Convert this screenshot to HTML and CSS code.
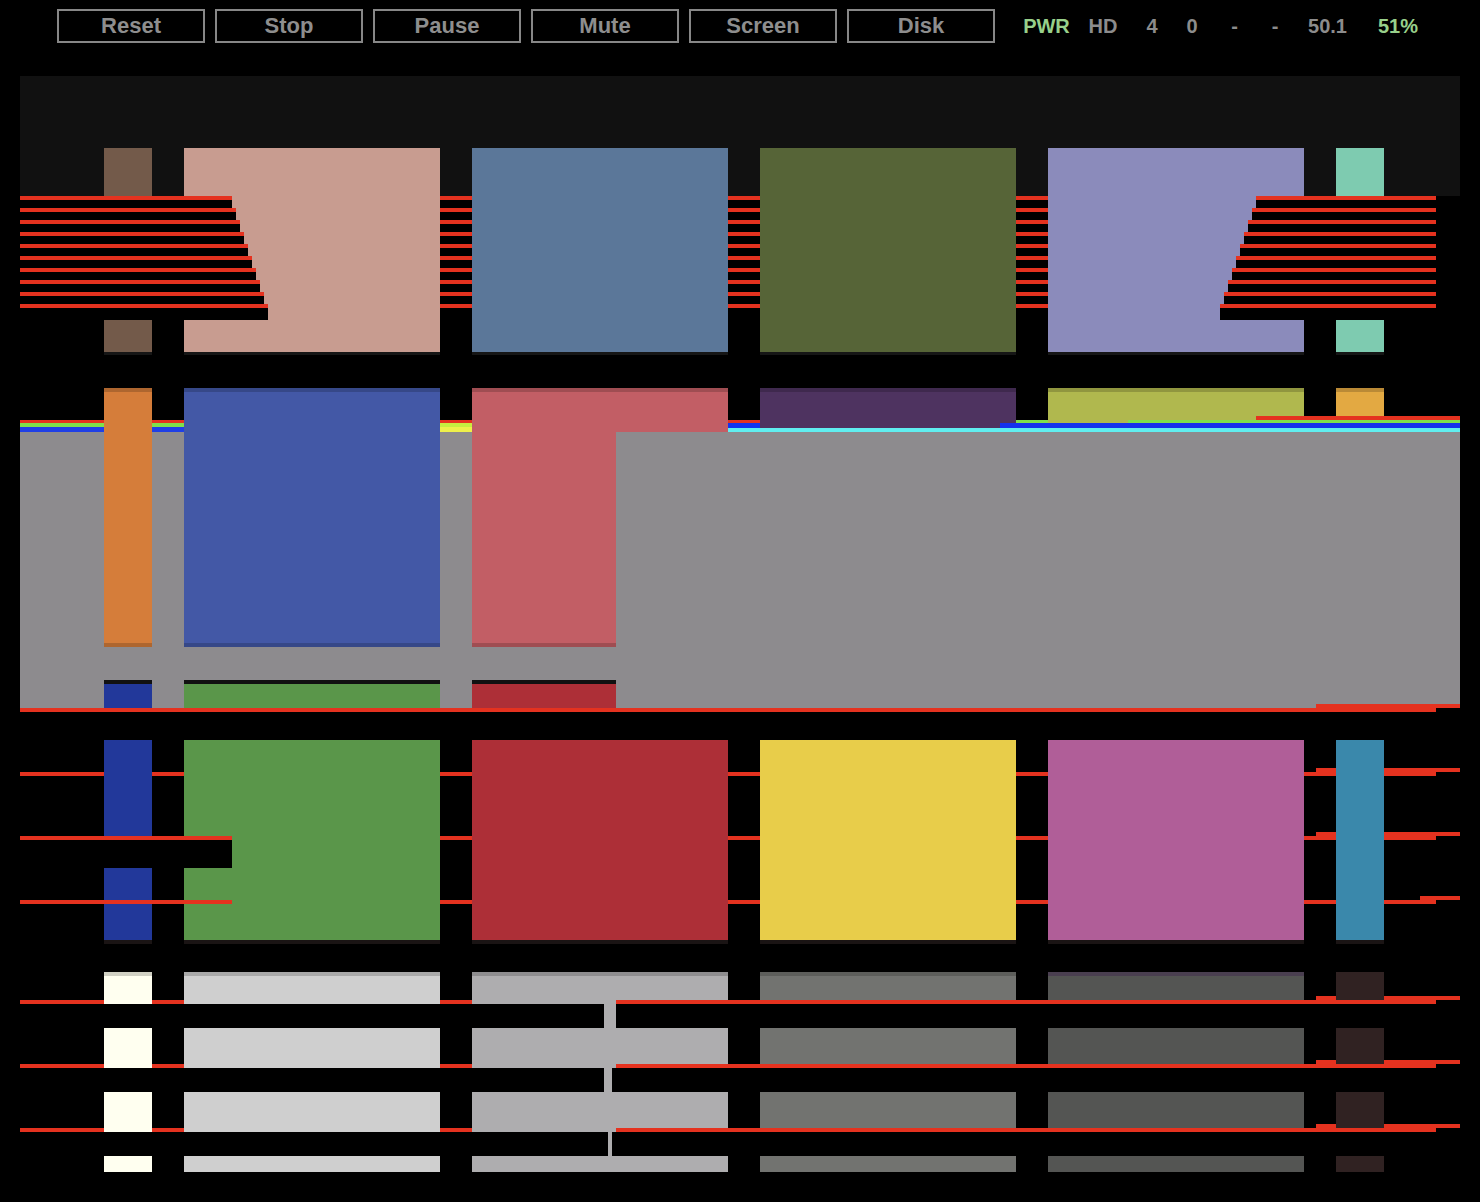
FILE: index.html
```html
<!DOCTYPE html>
<html>
<head>
<meta charset="utf-8">
<title>Emulator</title>
<link rel="stylesheet" href="styles.css">
</head>
<body>
<div class="topbar">
  <div class="buttons">
    <button class="btn">Reset</button>
    <button class="btn">Stop</button>
    <button class="btn">Pause</button>
    <button class="btn">Mute</button>
    <button class="btn">Screen</button>
    <button class="btn">Disk</button>
  </div>
  <div class="status">
    <span class="st on w1">PWR</span>
    <span class="st w2">HD</span>
    <span class="st w3">4</span>
    <span class="st w4">0</span>
    <span class="st w5">-</span>
    <span class="st w6">-</span>
    <span class="st w7">50.1</span>
    <span class="st on w8">51%</span>
  </div>
</div>
<svg class="screen" viewBox="0 60 1480 1142" width="1480" height="1142" shape-rendering="crispEdges">
  <rect x="20" y="76" width="1440" height="120" fill="#111111"/>

  <!-- row 1 : scanlines -->
  <g fill="#e5321f">
    <rect x="20" y="196" width="1416" height="4"/>
    <rect x="20" y="208" width="1416" height="4"/>
    <rect x="20" y="220" width="1416" height="4"/>
    <rect x="20" y="232" width="1416" height="4"/>
    <rect x="20" y="244" width="1416" height="4"/>
    <rect x="20" y="256" width="1416" height="4"/>
    <rect x="20" y="268" width="1416" height="4"/>
    <rect x="20" y="280" width="1416" height="4"/>
    <rect x="20" y="292" width="1416" height="4"/>
    <rect x="20" y="304" width="1416" height="4"/>
  </g>
  <!-- row 1 : patches -->
  <rect x="104" y="148" width="48" height="204" fill="#735a4a"/>
  <rect x="184" y="148" width="256" height="204" fill="#c89c90"/>
  <rect x="472" y="148" width="256" height="204" fill="#5b7799"/>
  <rect x="760" y="148" width="256" height="204" fill="#566437"/>
  <rect x="1048" y="148" width="256" height="204" fill="#8b8bbb"/>
  <rect x="1336" y="148" width="48" height="204" fill="#7ecbb0"/>
  <g fill="#161616">
    <rect x="104" y="352" width="48" height="3"/>
    <rect x="184" y="352" width="256" height="3"/>
    <rect x="472" y="352" width="256" height="3"/>
    <rect x="760" y="352" width="256" height="3"/>
    <rect x="1048" y="352" width="256" height="3"/>
    <rect x="1336" y="352" width="48" height="3"/>
  </g>
  <!-- row 1 : left glitch block -->
  <g fill="#000">
    <rect x="20" y="196" width="212" height="12"/>
    <rect x="20" y="208" width="216" height="12"/>
    <rect x="20" y="220" width="220" height="12"/>
    <rect x="20" y="232" width="224" height="12"/>
    <rect x="20" y="244" width="228" height="12"/>
    <rect x="20" y="256" width="232" height="12"/>
    <rect x="20" y="268" width="236" height="12"/>
    <rect x="20" y="280" width="240" height="12"/>
    <rect x="20" y="292" width="244" height="12"/>
    <rect x="20" y="304" width="248" height="16"/>
  </g>
  <g fill="#e5321f">
    <rect x="20" y="196" width="212" height="4"/>
    <rect x="20" y="208" width="216" height="4"/>
    <rect x="20" y="220" width="220" height="4"/>
    <rect x="20" y="232" width="224" height="4"/>
    <rect x="20" y="244" width="228" height="4"/>
    <rect x="20" y="256" width="232" height="4"/>
    <rect x="20" y="268" width="236" height="4"/>
    <rect x="20" y="280" width="240" height="4"/>
    <rect x="20" y="292" width="244" height="4"/>
    <rect x="20" y="304" width="248" height="4"/>
  </g>
  <!-- row 1 : right glitch block -->
  <g fill="#000">
    <rect x="1256" y="196" width="180" height="12"/>
    <rect x="1252" y="208" width="184" height="12"/>
    <rect x="1248" y="220" width="188" height="12"/>
    <rect x="1244" y="232" width="192" height="12"/>
    <rect x="1240" y="244" width="196" height="12"/>
    <rect x="1236" y="256" width="200" height="12"/>
    <rect x="1232" y="268" width="204" height="12"/>
    <rect x="1228" y="280" width="208" height="12"/>
    <rect x="1224" y="292" width="212" height="12"/>
    <rect x="1220" y="304" width="216" height="16"/>
  </g>
  <g fill="#e5321f">
    <rect x="1256" y="196" width="180" height="4"/>
    <rect x="1252" y="208" width="184" height="4"/>
    <rect x="1248" y="220" width="188" height="4"/>
    <rect x="1244" y="232" width="192" height="4"/>
    <rect x="1240" y="244" width="196" height="4"/>
    <rect x="1236" y="256" width="200" height="4"/>
    <rect x="1232" y="268" width="204" height="4"/>
    <rect x="1228" y="280" width="208" height="4"/>
    <rect x="1224" y="292" width="212" height="4"/>
    <rect x="1220" y="304" width="216" height="4"/>
  </g>

  <!-- row 2 : grey field and rainbow lines -->
  <rect x="20" y="432" width="1440" height="276" fill="#8d8b8e"/>
  <rect x="20" y="420" width="164" height="3" fill="#e5321f"/>
  <rect x="20" y="423" width="164" height="4" fill="#7fe04c"/>
  <rect x="20" y="427" width="164" height="5" fill="#1f3fe6"/>
  <rect x="440" y="420" width="32" height="3" fill="#e5321f"/>
  <rect x="440" y="423" width="32" height="4" fill="#c6ee40"/>
  <rect x="440" y="427" width="32" height="5" fill="#eef04a"/>
  <rect x="728" y="420" width="32" height="3" fill="#e5321f"/>
  <rect x="728" y="423" width="732" height="5" fill="#1432ee"/>
  <rect x="728" y="428" width="732" height="4" fill="#60eef0"/>
  <!-- row 2 : patches -->
  <rect x="104" y="388" width="48" height="259" fill="#d57d3a"/>
  <rect x="184" y="388" width="256" height="259" fill="#4358a6"/>
  <rect x="472" y="388" width="256" height="44" fill="#c25e65"/>
  <rect x="472" y="432" width="144" height="215" fill="#c25e65"/>
  <rect x="760" y="388" width="240" height="40" fill="#4e3360"/>
  <rect x="1000" y="388" width="16" height="35" fill="#4e3360"/>
  <rect x="1048" y="388" width="256" height="35" fill="#b0b84e"/>
  <rect x="1336" y="388" width="48" height="28" fill="#e3a942"/>
  <g fill="#000" fill-opacity="0.18">
    <rect x="104" y="388" width="48" height="4"/>
    <rect x="184" y="388" width="256" height="4"/>
    <rect x="472" y="388" width="256" height="4"/>
    <rect x="760" y="388" width="256" height="4"/>
    <rect x="1048" y="388" width="256" height="4"/>
    <rect x="1336" y="388" width="48" height="4"/>
    <rect x="104" y="643" width="48" height="4"/>
    <rect x="184" y="643" width="256" height="4"/>
    <rect x="472" y="643" width="144" height="4"/>
  </g>
  <rect x="1016" y="420" width="32" height="3" fill="#7fe04c"/>
  <rect x="1128" y="420" width="332" height="3" fill="#7fe04c"/>
  <rect x="1256" y="416" width="204" height="4" fill="#e5321f"/>
  <!-- row 2 : glimpse of row 3 -->
  <g fill="#111111">
    <rect x="104" y="680" width="48" height="4"/>
    <rect x="184" y="680" width="256" height="4"/>
    <rect x="472" y="680" width="144" height="4"/>
  </g>
  <rect x="104" y="684" width="48" height="24" fill="#22389a"/>
  <rect x="184" y="684" width="256" height="24" fill="#5a964a"/>
  <rect x="472" y="684" width="144" height="24" fill="#ad2f37"/>
  <g fill="#e5321f">
    <rect x="20" y="708" width="1296" height="4"/>
    <rect x="1316" y="704" width="120" height="8"/>
    <rect x="1436" y="704" width="24" height="4"/>
  </g>

  <!-- row 3 -->
  <g fill="#e5321f">
    <rect x="20" y="772" width="1416" height="4"/>
    <rect x="20" y="836" width="1416" height="4"/>
    <rect x="20" y="900" width="1416" height="4"/>
    <rect x="1316" y="768" width="120" height="4"/>
    <rect x="1436" y="768" width="24" height="4"/>
    <rect x="1316" y="832" width="120" height="4"/>
    <rect x="1436" y="832" width="24" height="4"/>
    <rect x="1420" y="896" width="16" height="4"/>
    <rect x="1436" y="896" width="24" height="4"/>
  </g>
  <rect x="104" y="740" width="48" height="200" fill="#22389a"/>
  <rect x="184" y="740" width="256" height="200" fill="#5a964a"/>
  <rect x="472" y="740" width="256" height="200" fill="#ad2f37"/>
  <rect x="760" y="740" width="256" height="200" fill="#e8cd4a"/>
  <rect x="1048" y="740" width="256" height="200" fill="#b05e98"/>
  <rect x="1336" y="740" width="48" height="200" fill="#3a88ab"/>
  <g fill="#1a1414">
    <rect x="104" y="940" width="48" height="4"/>
    <rect x="184" y="940" width="256" height="4"/>
    <rect x="472" y="940" width="256" height="4"/>
    <rect x="760" y="940" width="256" height="4"/>
    <rect x="1048" y="940" width="256" height="4"/>
    <rect x="1336" y="940" width="48" height="4"/>
  </g>
  <rect x="20" y="836" width="212" height="32" fill="#000"/>
  <rect x="20" y="836" width="212" height="4" fill="#e5321f"/>
  <rect x="20" y="900" width="212" height="4" fill="#e5321f"/>

  <!-- row 4 -->
  <g fill="#e5321f">
    <rect x="20" y="1000" width="1416" height="4"/>
    <rect x="20" y="1064" width="1416" height="4"/>
    <rect x="20" y="1128" width="1416" height="4"/>
  </g>
  <g fill="#fffff0">
    <rect x="104" y="972" width="48" height="32"/>
    <rect x="104" y="1028" width="48" height="40"/>
    <rect x="104" y="1092" width="48" height="40"/>
    <rect x="104" y="1156" width="48" height="16"/>
  </g>
  <g fill="#cfcfcf">
    <rect x="184" y="972" width="256" height="32"/>
    <rect x="184" y="1028" width="256" height="40"/>
    <rect x="184" y="1092" width="256" height="40"/>
    <rect x="184" y="1156" width="256" height="16"/>
  </g>
  <g fill="#aeadaf">
    <rect x="472" y="972" width="256" height="32"/>
    <rect x="472" y="1028" width="256" height="40"/>
    <rect x="472" y="1092" width="256" height="40"/>
    <rect x="472" y="1156" width="256" height="16"/>
    <rect x="604" y="1004" width="12" height="24"/>
    <rect x="604" y="1068" width="8" height="24"/>
    <rect x="608" y="1132" width="4" height="24"/>
  </g>
  <g fill="#727370">
    <rect x="760" y="972" width="256" height="32"/>
    <rect x="760" y="1028" width="256" height="40"/>
    <rect x="760" y="1092" width="256" height="40"/>
    <rect x="760" y="1156" width="256" height="16"/>
  </g>
  <g fill="#545553">
    <rect x="1048" y="972" width="256" height="32"/>
    <rect x="1048" y="1028" width="256" height="40"/>
    <rect x="1048" y="1092" width="256" height="40"/>
    <rect x="1048" y="1156" width="256" height="16"/>
  </g>
  <g fill="#302222">
    <rect x="1336" y="972" width="48" height="32"/>
    <rect x="1336" y="1028" width="48" height="40"/>
    <rect x="1336" y="1092" width="48" height="40"/>
    <rect x="1336" y="1156" width="48" height="16"/>
  </g>
  <g fill="#000" fill-opacity="0.18">
    <rect x="104" y="972" width="48" height="4"/>
    <rect x="184" y="972" width="256" height="4"/>
    <rect x="472" y="972" width="256" height="4"/>
    <rect x="760" y="972" width="256" height="4"/>
  </g>
  <rect x="1048" y="972" width="256" height="4" fill="#4a3f50"/>
  <g fill="#e5321f">
    <rect x="616" y="1000" width="820" height="4"/>
    <rect x="616" y="1064" width="820" height="4"/>
    <rect x="616" y="1128" width="820" height="4"/>
    <rect x="1316" y="996" width="20" height="4"/>
    <rect x="1384" y="996" width="52" height="4"/>
    <rect x="1436" y="996" width="24" height="4"/>
    <rect x="1316" y="1060" width="20" height="4"/>
    <rect x="1384" y="1060" width="52" height="4"/>
    <rect x="1436" y="1060" width="24" height="4"/>
    <rect x="1316" y="1124" width="20" height="4"/>
    <rect x="1384" y="1124" width="52" height="4"/>
    <rect x="1436" y="1124" width="24" height="4"/>
  </g>
</svg>
</body>
</html>
```

FILE: styles.css
```css
html, body {
  margin: 0;
  padding: 0;
  background: #000;
}

body {
  width: 1480px;
  height: 1202px;
  overflow: hidden;
  font-family: "Liberation Sans", Arial, sans-serif;
}

.topbar {
  display: flex;
  align-items: flex-start;
  height: 60px;
  box-sizing: border-box;
  padding: 9px 0 0 57px;
}

.buttons {
  display: flex;
  gap: 10px;
}

.btn {
  width: 148px;
  height: 34px;
  box-sizing: border-box;
  margin: 0;
  padding: 0;
  border: 2px solid #878787;
  background: #000;
  color: #8e8e8e;
  font-family: "Liberation Sans", Arial, sans-serif;
  font-weight: bold;
  font-size: 22px;
  line-height: 30px;
  text-align: center;
}

.status {
  display: flex;
  align-items: center;
  height: 34px;
  margin-left: 25px;
  font-weight: bold;
  font-size: 20px;
  color: #8c8c8c;
}

.st {
  text-align: center;
  white-space: nowrap;
}

.st.on {
  color: #98d08a;
}

.w1 { width: 53px; }
.w2 { width: 60px; }
.w3 { width: 38px; }
.w4 { width: 42px; }
.w5 { width: 43px; }
.w6 { width: 38px; }
.w7 { width: 67px; }
.w8 { width: 74px; }

.screen {
  display: block;
}
```
